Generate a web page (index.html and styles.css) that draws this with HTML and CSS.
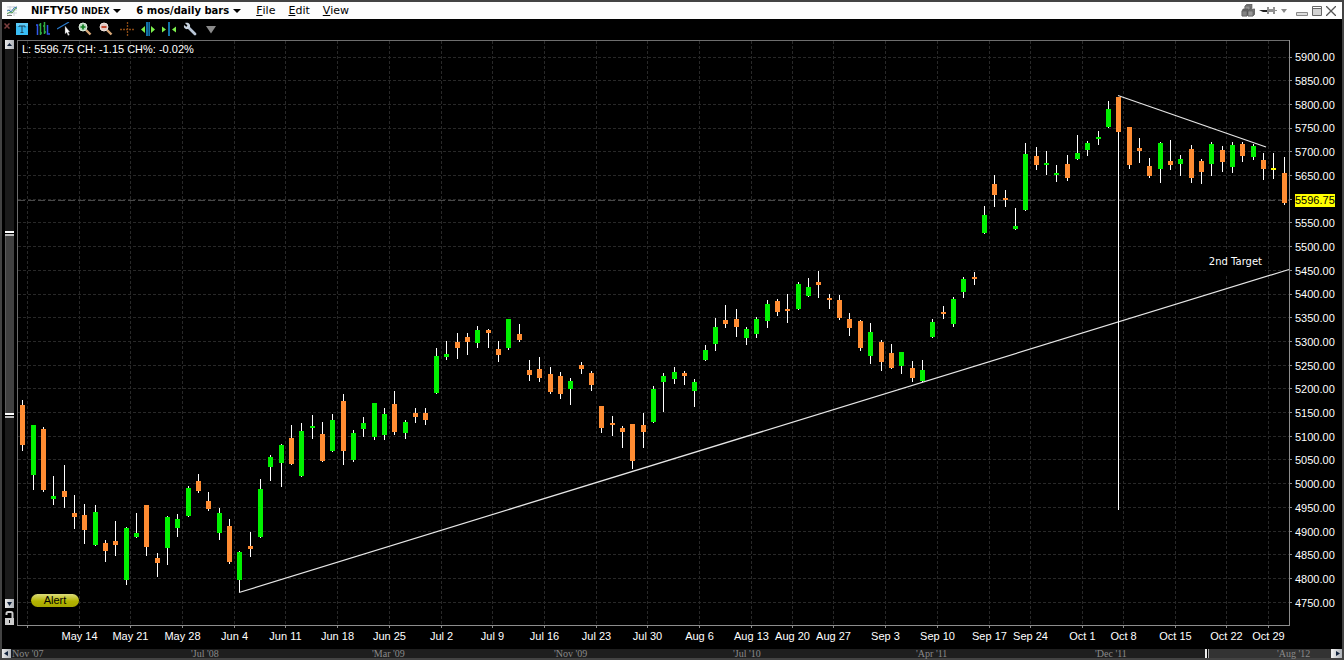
FILE: index.html
```html
<!DOCTYPE html>
<html lang="en">
<head>
<meta charset="utf-8">
<title>NIFTY50 INDEX - 6 mos/daily bars</title>
<link rel="stylesheet" href="styles.css">
</head>
<body>
<div class="window">
  <header class="titlebar">
    <svg class="app-icon" viewBox="0 0 12 12" aria-hidden="true">
      <path d="M1 2h10M1 5h10M1 8h10M4 1v10M8 1v10" stroke="#c9cfd6" fill="none"/>
      <path d="M1 6l2-1 2 2 3-4 3-1" stroke="#3f7fb5" fill="none"/>
      <path d="M1 9l3-2 2 1 3-4 2-1" stroke="#4a9a4a" fill="none"/>
      <path d="M1 10.500h5" stroke="#777"/>
    </svg>
    <button class="menu menu-symbol" type="button">NIFTY50 <small>INDEX</small><span class="caret"></span></button>
    <button class="menu menu-period" type="button">6 mos/daily bars<span class="caret"></span></button>
    <nav class="menus">
      <button class="menu" type="button"><u>F</u>ile</button>
      <button class="menu" type="button"><u>E</u>dit</button>
      <button class="menu" type="button"><u>V</u>iew</button>
    </nav>
    <div class="window-tools">
      <button type="button" aria-label="Group">
        <svg width="14" height="13" viewBox="0 0 14 13"><g stroke="#555" stroke-width=".6"><path d="M4 2l2-2h5v4l-2 2H4z" fill="#777"/><path d="M4 2h5v4H4z" fill="#8f8f8f"/><path d="M1 7l1-2h5v5l-1 2H1z" fill="#666"/><path d="M1 7h5v5H1z" fill="#828282"/><path d="M7 7l2-2h5v5l-2 2H7z" fill="#777"/><path d="M7 7h5v5H7z" fill="#999"/></g></svg>
      </button>
      <button type="button" aria-label="Pin">
        <svg width="18" height="9" viewBox="0 0 18 9"><path d="M0 4h8v2H4z" fill="#222"/><path d="M8 1h2v7H8zM10 3h4v3h-4zM14 1h2v7h-2zM16 4h2v1h-2z" fill="#909090"/></svg>
      </button>
      <button class="pin-menu" type="button" aria-label="Pin options"><span class="caret caret-grey"></span></button>
      <button type="button" aria-label="Minimize">
        <svg width="12" height="10" viewBox="0 0 12 10"><path d="M.5 6.500h11v3H.5z" fill="#ddd" stroke="#888"/></svg>
      </button>
      <button type="button" aria-label="Maximize">
        <svg width="10" height="10" viewBox="0 0 10 10"><path d="M.5.5h9v9h-9z" fill="#d2d2d2" stroke="#666"/><path d="M1 1h8v1H1z" fill="#fff"/><path d="M1 2.500h8" stroke="#666"/></svg>
      </button>
      <button type="button" aria-label="Close">
        <svg width="10" height="10" viewBox="0 0 10 10"><path d="M0 0l10 10M10 0L0 10" stroke="#555" stroke-width="1.300"/></svg>
      </button>
    </div>
  </header>

  <div class="toolbar">
    <button class="toolbar-close" type="button" aria-label="Close toolbar"><svg viewBox="0 0 6 6"><path d="M.5.500l5 5M5.500.5l-5 5" stroke="#7d4040" stroke-width="1.500"/></svg></button>
    <button type="button" aria-label="Text"><svg viewBox="0 0 14 14"><path d="M1 1h12v12H1z" fill="#39bdf5"/><path d="M1 1h12v3H1z" fill="#5ccbf8"/><path d="M4 5V4h6v1.500M7 4v6M5.500 10.500h3" stroke="#1d4058" fill="none"/></svg></button>
    <button type="button" aria-label="Bar style"><svg viewBox="0 0 14 14"><g fill="none" stroke-width="1.500"><path d="M0 3h1.500v10" stroke="#3157e8"/><path d="M4.500 1v12M3 3h1.500M4.500 11H6" stroke="#2fae42"/><path d="M8.500 0v12M7 4h1.500M8.500 10H10" stroke="#2fae42"/><path d="M11.500 3v9H14" stroke="#3157e8"/></g></svg></button>
    <button type="button" aria-label="Trend line"><svg viewBox="0 0 14 14"><path d="M0 7L12 0" stroke="#2878c8" stroke-width="1.200"/><path d="M8 4v8l1.700-1.500L11 13.500l1.500-.6-1.300-2.800H13z" fill="#fff" stroke="#555" stroke-width=".4"/></svg></button>
    <button type="button" aria-label="Zoom in"><svg viewBox="0 0 14 14"><path d="M8 8l4.500 4.500" stroke="#d8a878" stroke-width="2.400"/><circle cx="5" cy="5" r="4" fill="#b9d8c0" stroke="#dcebdc"/><path d="M5 2.500v5M2.500 5h5" stroke="#0d7d1c" stroke-width="1.700"/></svg></button>
    <button type="button" aria-label="Zoom out"><svg viewBox="0 0 14 14"><path d="M8 8l4.500 4.500" stroke="#d8a878" stroke-width="2.400"/><circle cx="5" cy="5" r="4" fill="#e2c8c2" stroke="#eee4e0"/><path d="M2.500 5h5" stroke="#bf3014" stroke-width="1.700"/></svg></button>
    <button type="button" aria-label="Crosshair"><svg viewBox="0 0 14 14"><path d="M7.500 0v14M0 7.500h14" stroke="#8a4a14" stroke-width="1.300" stroke-dasharray="2 1"/></svg></button>
    <button type="button" aria-label="Widen bars"><svg viewBox="0 0 14 14"><path d="M5 0h4v14H5z" fill="#1272a8"/><path d="M7 0h1v14H7z" fill="#0c4c78"/><path d="M4 4v7L0 7.500zM10 4v7l4-3.500z" fill="#7df04c"/></svg></button>
    <button type="button" aria-label="Narrow bars"><svg viewBox="0 0 14 14"><path d="M6 0h2v14H6z" fill="#1272a8"/><path d="M0 4.500v6l4-3zM14 4.500v6l-4-3z" fill="#7df04c"/></svg></button>
    <button type="button" aria-label="Settings"><svg viewBox="0 0 14 14"><path d="M5 5l7 7" stroke="#b9c6d6" stroke-width="2.800" stroke-linecap="round"/><path d="M2 1l2.500 2.500L3.500 5 1 3c-.7 3 1.300 4.700 4 4l2-2c.8-2.700-1.500-5-5-4z" fill="#c9d4e0"/></svg></button>
    <button type="button" aria-label="More tools"><svg viewBox="0 0 14 14"><path d="M2 4h10L7 11.500z" fill="#8a8a8a"/></svg></button>
  </div>

  <main class="chart">
    <div class="scale">
      <button class="arrow" type="button" aria-label="Scale up"><svg viewBox="0 0 9 9"><path d="M2 6h5L4.500 3z" fill="#12233c"/></svg></button>
      <div class="scale-gap-top"></div>
      <div class="scale-thumb"></div>
      <div class="scale-gap-bottom"></div>
      <button class="arrow" type="button" aria-label="Scale down"><svg viewBox="0 0 9 9"><path d="M2 3h5L4.500 7z" fill="#12233c"/></svg></button>
      <button class="lock" type="button" aria-label="Unlock scale"><svg viewBox="0 0 9 14"><path d="M1.500 4V2.500Q1.500 1 3 1h3q1.500 0 1.500 1.500V7" fill="none" stroke="#ccc" stroke-width="2"/><path d="M0 7h9v7H0z" fill="#ccc"/><path d="M4 9h1v3H4z" fill="#111"/></svg></button>
    </div>

    <section class="plot" aria-label="Daily price bars">
      <svg class="plot-canvas" id="canvas" viewBox="17 40 1276 590" preserveAspectRatio="none" shape-rendering="crispEdges"></svg>
      <p class="quote">L: 5596.75 CH: -1.15 CH%: -0.02%</p>
      <p class="note">2nd Target</p>
      <button class="alert" type="button">Alert</button>
    </section>

    <ol class="prices" id="prices"></ol>
    <div class="dates" id="dates"></div>
  </main>

  <footer class="history">
    <button class="arrow" type="button" aria-label="Earlier"><svg viewBox="0 0 9 9"><path d="M6 2v5L2 4.500z" fill="#12233c"/></svg></button>
    <div class="history-track" id="history"><div class="history-thumb"></div></div>
    <button class="arrow" type="button" aria-label="Later"><svg viewBox="0 0 9 9"><path d="M3 2v5l4-2.500z" fill="#12233c"/></svg></button>
  </footer>
</div>
<script src="chart.js"></script>
</body>
</html>
```

FILE: styles.css
```css
* { box-sizing: border-box; }

body {
  margin: 0;
  background: #fff;
  color: #fff;
  font: 11px/13px "Liberation Sans", Arial, sans-serif;
}

button {
  margin: 0;
  padding: 0;
  border: 0;
  background: none;
  color: inherit;
  font: inherit;
}

p, ol { margin: 0; padding: 0; list-style: none; }

svg { display: block; }

.window {
  display: flex;
  flex-direction: column;
  height: calc(100vh - 1px);
  min-height: 300px;
  border: 2px solid #434343;
  background: #000;
}

.titlebar {
  display: flex;
  align-items: center;
  flex: none;
  height: 17px;
  padding: 0 4px;
  background: #fdfdfd;
  color: #000;
  font: 11px/15px "DejaVu Sans", Verdana, sans-serif;
}

.app-icon { width: 12px; height: 12px; }

.menu { display: flex; align-items: baseline; white-space: pre; }
.menu small { font-size: 8px; }
.menu-symbol, .menu-period { font-size: 10px; font-weight: bold; }
.menu-symbol { margin-left: 13px; }
.menu-period { margin-left: 15px; }
.menus { display: flex; gap: 13px; margin-left: 15px; }

.caret {
  align-self: center;
  margin-left: 4px;
  border: 4px solid transparent;
  border-top-color: #000;
  border-bottom: 0;
}
.caret-grey { display: block; margin: 0; border-width: 3px; border-bottom: 0; border-top: 4px solid #888; }

.window-tools { display: flex; align-items: center; gap: 4px; margin-left: auto; padding-right: 2px; }
.pin-menu { margin-right: 5px; }

.toolbar { display: flex; align-items: center; gap: 1px; flex: none; height: 21px; padding-bottom: 2px; }
.toolbar button { display: grid; place-items: center; width: 20px; height: 19px; }
.toolbar button svg { width: 14px; height: 14px; }
.toolbar .toolbar-close { width: 10px; margin-right: -1px; align-items: start; padding-top: 4px; }
.toolbar .toolbar-close svg { width: 6px; height: 6px; }

.chart {
  display: grid;
  grid-template: 1fr 19px / 15px 1fr 49px;
  flex: 1;
  min-height: 0;
}

.scale {
  display: flex;
  flex-direction: column;
  width: 9px;
  margin: 0 0 5px 3px;
  background: #1b1b1b;
}
.scale-gap-top { flex: 182; }
.scale-thumb {
  flex: 187;
  background:
    linear-gradient(#fff 2px, #000 2px, #000 3px, #bbb 3px) top / 100% 5px no-repeat,
    linear-gradient(#fff 2px, #000 2px, #000 3px, #bbb 3px) bottom / 100% 5px no-repeat,
    linear-gradient(90deg, #5c5c5c 1px, #404040 1px);
}
.scale-gap-bottom { flex: 181; }

.arrow {
  flex: none;
  width: 9px;
  height: 9px;
  background: linear-gradient(90deg, #e8e8e8, #aeb2b8);
}
.lock { flex: none; height: 17px; padding-top: 3px; background: #000; }

.plot { position: relative; min-width: 0; min-height: 0; }
.plot-canvas { position: absolute; width: 100%; height: 100%; }
.quote { position: absolute; top: 3px; left: 5px; }
.note {
  position: absolute;
  top: 36%;
  right: 28px;
  padding: 3px 3px 7px 2px;
  background: #000;
  font: 10px/13px "DejaVu Sans", Verdana, sans-serif;
}
.alert {
  position: absolute;
  bottom: 23px;
  left: 14px;
  width: 48px;
  height: 13px;
  border-radius: 7px;
  background: linear-gradient(#dcdc7c, #b4b400 55%, #a6a600);
  color: #000;
}

.prices {
  display: grid;
  grid-auto-rows: 1fr;
  align-items: center;
  justify-items: start;
  min-height: 0;
  padding: 6px 0 15px 2px;
}
.price-last { background: #ff0; color: #000; }

.dates { position: relative; grid-column: 2; line-height: 12px; }
.dates span { position: absolute; top: 0; transform: translateX(-50%); white-space: nowrap; }

.history { display: flex; flex: none; height: 9px; background: #1e1e1e; }
.history-track {
  position: relative;
  flex: 1;
  color: #8a8a8a;
  font: 10px/9px "Liberation Serif", "Times New Roman", serif;
}
.history-track span { position: absolute; top: 0; white-space: nowrap; }
.history-thumb {
  width: 9.700%;
  height: 9px;
  margin-left: auto;
  border: solid #eee;
  border-width: 0 2px;
  background: linear-gradient(90deg, #000 1px, #aaa 1px, #aaa 2px, #333 2px);
}
```

FILE: chart.js
```js
// Each bar: x, high, body top, body bottom, low, kind (g up, o down, y unchanged)
const bars = `
22 400 405 445 451 o;33 425 425 475 490 g;43 427 429 490 492 o;53 476 496 499 505 g;64 465 491 497 508 o
74 495 513 517 529 o;84 504 515 530 544 o;95 505 512 545 546 g;105 540 543 551 562 o;115 521 541 545 556 o
126 527 528 580 585 g;136 513 533 537 538 g;146 505 505 547 556 o;157 553 558 563 577 o;167 516 517 548 565 g
177 514 519 528 537 g;188 486 488 516 517 g;198 474 481 491 493 o;208 492 501 509 511 o;219 508 513 533 540 g
229 519 526 562 564 o;239 551 552 580 592 g;250 532 546 549 557 o;260 479 489 537 538 g;270 455 457 467 481 g
281 444 445 463 487 g;291 425 438 464 465 o;301 423 431 476 477 g;312 415 426 428 439 g;322 422 434 461 462 o
332 414 420 451 452 g;343 394 401 451 465 o;353 430 433 460 462 g;363 417 423 429 437 g;374 403 403 437 440 g
384 408 414 435 440 g;394 391 404 432 435 o;405 420 422 433 439 g;415 408 413 417 423 o;425 408 413 420 425 o
436 348 356 393 394 g;446 341 354 357 360 g;457 333 342 348 359 o;467 333 337 342 355 o;477 326 330 343 348 g
488 329 330 333 348 o;498 341 349 355 362 o;508 319 319 348 350 g;519 324 334 340 342 o;529 360 370 375 381 o
539 357 369 378 382 o;550 367 374 392 394 o;560 372 376 394 399 o;570 378 381 389 405 g;581 362 365 369 374 o
591 371 373 385 391 o;601 406 406 428 433 o;612 416 423 425 436 o;622 426 428 432 448 o;632 424 424 461 469 o
643 413 425 432 448 o;653 386 389 422 423 g;663 373 376 382 412 g;674 367 372 379 384 g;684 371 373 376 385 o
694 379 382 391 407 g;705 345 350 360 361 g;715 318 327 344 351 g;725 305 320 324 328 o;736 309 319 327 337 o
746 327 329 338 345 g;756 317 319 334 338 g;767 300 304 321 328 g;777 299 301 312 316 o;787 294 309 311 323 o
798 282 284 309 310 g;808 278 287 296 297 g;818 271 282 285 298 o;829 294 298 300 309 o;839 295 300 318 320 o
849 313 319 328 336 o;860 320 321 348 351 o;870 323 332 356 364 g;881 340 342 362 371 o;891 344 353 368 369 o
901 352 352 366 374 g;912 361 368 378 382 o;922 360 370 381 382 g;932 319 322 337 338 g;943 306 312 314 319 o
953 297 299 324 327 g;963 277 279 292 298 g;974 272 277 279 285 o;984 206 215 233 234 g;994 175 184 195 207 o
1005 190 198 200 207 o;1015 208 226 229 230 g;1025 143 154 210 211 g;1036 147 156 165 170 o;1046 151 163 165 175 g
1056 165 173 175 182 g;1067 155 164 178 181 o;1077 135 153 159 160 g;1087 141 143 150 156 g;1098 131 137 139 145 g
1108 101 109 127 128 g;1118 97 97 132 132 o;1129 127 127 165 169 o;1139 138 148 151 163 o;1149 158 166 176 178 o
1160 142 143 169 183 g;1170 140 161 165 170 o;1180 155 159 164 176 g;1191 145 149 178 183 o;1201 159 161 172 184 o
1211 142 144 164 176 g;1222 146 150 162 172 o;1232 142 145 167 173 g;1242 142 144 156 162 o;1253 144 146 157 160 g
1263 153 160 169 180 o;1273 153 168 170 179 y;1284 157 173 203 205 o`
  .trim().split(/[;\n]/).map(row => row.split(' '));

const weeks = [[27, ''], [79, 'May 14'], [130, 'May 21'], [182, 'May 28'], [234, 'Jun 4'], [285, 'Jun 11'],
  [337, 'Jun 18'], [389, 'Jun 25'], [441, 'Jul 2'], [492, 'Jul 9'], [544, 'Jul 16'], [596, 'Jul 23'],
  [647, 'Jul 30'], [699, 'Aug 6'], [751, 'Aug 13'], [792, 'Aug 20'], [833, 'Aug 27'], [885, 'Sep 3'],
  [937, 'Sep 10'], [989, 'Sep 17'], [1030, 'Sep 24'], [1082, 'Oct 1'], [1123, 'Oct 8'], [1175, 'Oct 15'],
  [1226, 'Oct 22'], [1268, 'Oct 29']];

const fills = { g: '#00f000', o: '#ff8c32', y: '#ffff00' };
const line = (x1, y1, x2, y2, extra) =>
  `<path d="M${x1} ${y1}L${x2} ${y2}" ${extra}/>`;
const rect = (x, y, w, h, fill) =>
  `<rect x="${x}" y="${y}" width="${w}" height="${h}" fill="${fill}"/>`;

let art = '';
const grid = 'stroke="#282828" stroke-dasharray="3 2"';
for (let i = 0; i < 24; i++) {
  const y = Math.floor(57 + i * 23.7) + 0.5;
  art += line(18, y, 1289, y, grid) + rect(1289, y - 0.5, 3, 1, '#8c8c8c');
}
for (const [x] of weeks) {
  art += line(x + 0.5, 41, x + 0.5, 625, grid) + rect(x, 625, 1, 3, '#8c8c8c');
}
art += line(18, 200.5, 1289, 200.5, 'stroke="#484848" stroke-dasharray="7 3"');
art += rect(17, 40, 1273, 1, '#6e6e6e') + rect(17, 40, 1, 586, '#6e6e6e');
art += rect(1289, 40, 1, 586, '#8c8c8c') + rect(17, 625, 1273, 1, '#8c8c8c');

const trend = 'stroke="#e6e6e6" stroke-width="1.2" fill="none" shape-rendering="auto"';
art += line(239, 592.5, 1289, 269.5, trend) + line(1118, 95.5, 1266, 147, trend);
art += rect(1118, 97, 1, 413, '#fff');

for (const [x, high, top, bottom, low, kind] of bars) {
  art += rect(x, high, 1, low - high, '#fff') + rect(x - 2, top, 5, bottom - top, fills[kind]);
}
document.getElementById('canvas').innerHTML = art;

// The last traded price takes the place of its nearest scale step
let prices = '';
for (let p = 5900; p >= 4750; p -= 50) {
  prices += p === 5600 ? '<li class="price-last">5596.75</li>' : `<li>${p}.00</li>`;
}
document.getElementById('prices').innerHTML = prices;

document.getElementById('dates').innerHTML = weeks.map(([x, label]) =>
  `<span style="left:${((x - 16.5) / 1276 * 100).toFixed(2)}%">${label}</span>`).join('');

const months = [[12, "Nov '07"], [191, "'Jul '08"], [372, "'Mar '09"], [554, "'Nov '09"], [733, "'Jul '10"],
  [916, "'Apr '11"], [1095, "'Dec '11"], [1277, "'Aug '12"]];
document.getElementById('history').insertAdjacentHTML('beforeend', months.map(([x, label]) =>
  `<span style="left:${((x - 11) / 1322 * 100).toFixed(2)}%">${label}</span>`).join(''));
```
